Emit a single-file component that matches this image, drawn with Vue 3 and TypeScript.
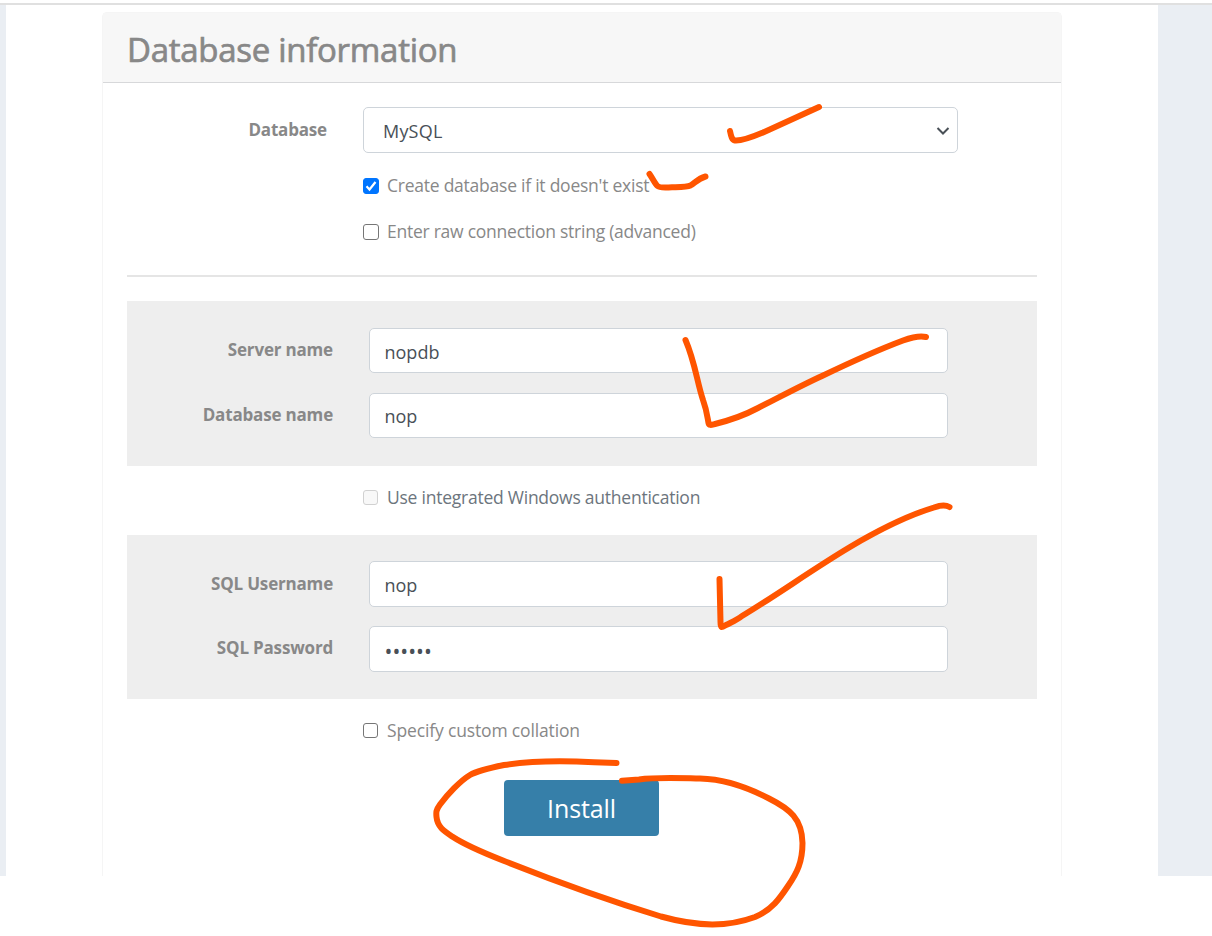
<script setup lang="ts">
import { ref } from 'vue'

const provider = ref('MySQL')
const createDatabase = ref(true)
const rawConnection = ref(false)
const windowsAuth = ref(false)
const customCollation = ref(false)
const serverName = ref('nopdb')
const databaseName = ref('nop')
const username = ref('nop')
const password = ref('nopnop')

const strokes: string[] = [
  'M730 131 C731 136 732 140 735 140.500 C741 141 750 138 763 132.500 L819 107',
  'M649.500 174 C653 179 655 184 657.500 186 C660 188.500 666 187.500 672 187.300 C680 187 687 187 690.500 185.500 C695 183 698 178.500 705.500 176.500',
  'M685.500 340 C695 362 697 382 703 400 C707 411 707.500 418 708.500 423 C709 426 712 424.700 715 424 C729 420.500 743 416 758 408 C780 397 800 386 822 376 C847 364 875 351 903 340.500 C914 336.500 920 335.500 926 337',
  'M719.500 579 L720.500 622 C720.500 629 722 627.500 726 625 C733 621.500 737 620 742 616 C777 595 813 569 850 547 C877 531 903 517 934 507.500 C941 505 946 505 949.500 507',
  'M616.500 763 L594 762.300 C560 760.500 534 760.500 504 765 C492 767.500 478 770.500 470 775 C460 781 447 795 440 804.500 C436 810 436 812 436.500 817 C437.500 827 444 831 453 837 C466 845.500 484 853 503 860.500 C552 880 607 900 661 916.500 C699 927 728 927 755 917 C772 910 780 898 788 886 C797 873 802.500 862 802.500 843 C802 819 790 809 769 798.500 C745 786 724 779 700 778.500 C677 778 656 777 639 779.500 L622 780.700',
]
</script>

<template>
  <div class="page">
    <div class="topline"></div>
    <div class="backdrop">
      <main class="sheet">
        <section class="card">
          <header class="card-header"><h1>Database information</h1></header>
          <div class="card-body">
            <div class="row provider">
              <label class="name" for="provider">Database</label>
              <div class="select-wrap">
                <select id="provider" v-model="provider"><option>MySQL</option></select>
                <svg class="chevron" viewBox="0 0 14 10"><path d="M1.500 2 L7 7.500 L12.500 2" /></svg>
              </div>
            </div>
            <label class="check create"><input v-model="createDatabase" type="checkbox" /><span>Create database if it doesn't exist</span></label>
            <label class="check raw"><input v-model="rawConnection" type="checkbox" /><span>Enter raw connection string (advanced)</span></label>
            <hr />
            <div class="panel first">
              <div class="row">
                <label class="name" for="server">Server name</label>
                <input id="server" v-model="serverName" class="field" type="text" />
              </div>
              <div class="row">
                <label class="name" for="database">Database name</label>
                <input id="database" v-model="databaseName" class="field raised" type="text" />
              </div>
            </div>
            <label class="check auth"><input v-model="windowsAuth" type="checkbox" disabled /><span>Use integrated Windows authentication</span></label>
            <div class="panel second">
              <div class="row">
                <label class="name lowered" for="username">SQL Username</label>
                <input id="username" v-model="username" class="field raised" type="text" />
              </div>
              <div class="row">
                <label class="name" for="password">SQL Password</label>
                <input id="password" v-model="password" class="field secret" type="password" />
              </div>
            </div>
            <label class="check collation"><input v-model="customCollation" type="checkbox" /><span>Specify custom collation</span></label>
            <button type="button" class="install">Install</button>
          </div>
        </section>
      </main>
    </div>
    <svg class="ink" viewBox="0 0 1212 936">
      <path v-for="(d, i) in strokes" :key="i" :d="d" />
    </svg>
  </div>
</template>

<style>
body { margin: 0; background: #fff; overflow: hidden; }
</style>

<style scoped>
.page {
  position: relative;
  box-sizing: border-box;
  width: 1212px;
  height: 936px;
  padding-top: 3px;
  overflow: hidden;
  font-family: "Open Sans", "Noto Sans", sans-serif;
  font-size: 18px;
  color: #888;
}
.page * { box-sizing: border-box; }
.topline { height: 2px; background: #e0e0e0; }
.backdrop { height: 871px; padding: 0 54px 0 6px; background: #eaeef3; }
.sheet { height: 871px; padding: 7px 96px 0; background: #fff; }
.card {
  height: 864px;
  border: 1px solid #f5f5f5;
  border-bottom: 0;
  border-radius: 5px 5px 0 0;
}
.card-header { height: 70px; padding: 0 24px; background: #f7f7f7; border-bottom: 1px solid #d7d8da; }
h1 { margin: 0; font-size: 33px; line-height: 73px; font-weight: 500; letter-spacing: -0.28px; -webkit-text-stroke: 0.7px #888; white-space: nowrap; }
.card-body { display: flex; flex-direction: column; padding: 24px 24px 0; }
.row { display: flex; }
.name { width: 206px; margin-right: 36px; text-align: right; font-weight: 700; font-size: 17px; line-height: 44px; letter-spacing: -0.18px; white-space: nowrap; }
.provider .name { width: 200px; line-height: 46px; }
.name.lowered { line-height: 46px; }
.select-wrap { position: relative; width: 595px; height: 46px; }
select, .field {
  margin: 0;
  border: 1px solid #ced4da;
  border-radius: 5px;
  outline: 0;
  background: #fff;
  color: #495057;
  font: 18px "Open Sans", "Noto Sans", sans-serif;
}
select { appearance: none; width: 595px; height: 46px; padding: 2px 19px 0; letter-spacing: 0.2px; }
.chevron { position: absolute; right: 8px; top: 19px; width: 14px; height: 10px; fill: none; stroke: #495057; stroke-width: 2; }
.check { display: flex; align-items: center; height: 24px; padding-left: 236px; white-space: nowrap; }
.check span { font-size: 17.5px; padding-bottom: 1px; letter-spacing: -0.24px; }
.check input {
  appearance: none;
  flex: none;
  width: 16px;
  height: 16px;
  margin: 0 8px 0 0;
  border: 1px solid #767676;
  border-radius: 3px;
  background: #fff;
}
.check input:checked {
  border-color: #0075ff;
  background: #0075ff url("data:image/svg+xml,%3Csvg xmlns='http://www.w3.org/2000/svg' viewBox='0 0 14 14'%3E%3Cpath d='M2.500 7.300 5.500 10.500 11.500 3' fill='none' stroke='white' stroke-width='2.200'/%3E%3C/svg%3E") center / 14px no-repeat;
}
.check input:disabled { border-color: #d1d1d1; background: #f8f8f8; }
.create { margin-top: 21px; }
.raw { margin-top: 22px; }
.create span, .raw span { padding-bottom: 2px; }
.raw span { letter-spacing: -0.25px; }
hr { width: 100%; height: 2px; margin: 31px 0 24px; border: 0; background: #e5e5e5; }
.panel { display: flex; flex-direction: column; gap: 20px; background: #eee; }
.first { height: 165px; padding-top: 27px; }
.second { height: 164px; padding-top: 26px; gap: 19px; margin-top: 26px; }
.field { width: 579px; height: 45px; padding: 3px 15px 0; text-indent: -0.5px; }
.second .field { height: 46px; }
.field.raised { padding-top: 1px; }
.field.secret { font-size: 21px; padding-top: 3px; }
.auth { margin-top: 19px; color: #6c757d; }
.auth input, .collation input { width: 15px; height: 15px; margin-right: 9px; }
.collation { margin-top: 19px; }
.collation span { padding: 0; letter-spacing: -0.15px; }
.install {
  align-self: center;
  width: 155px;
  height: 56px;
  margin: 38px 1px 0 0;
  padding: 0 0 1px;
  border: 0;
  border-radius: 4px;
  background: #367fa9;
  color: #fff;
  font: 25px "Open Sans", "Noto Sans", sans-serif;
  letter-spacing: -0.1px;
}
.ink { position: absolute; inset: 0; width: 1212px; height: 936px; pointer-events: none; }
.ink path { fill: none; stroke: #ff5500; stroke-width: 6; stroke-linecap: round; stroke-linejoin: round; }
</style>
